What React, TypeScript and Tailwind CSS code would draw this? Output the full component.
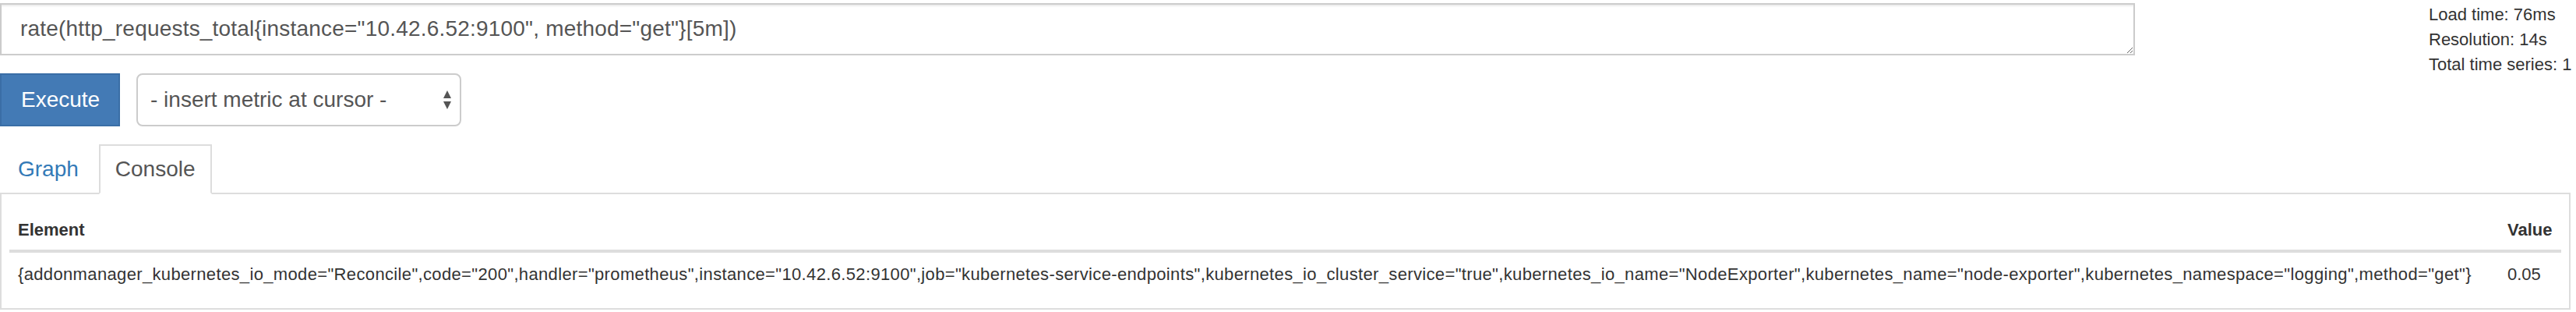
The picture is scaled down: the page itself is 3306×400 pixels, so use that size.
import React from 'react';

const query = 'rate(http_requests_total{instance="10.42.6.52:9100", method="get"}[5m])';
const element =
  '{addonmanager_kubernetes_io_mode="Reconcile",code="200",handler="prometheus",instance="10.42.6.52:9100",job="kubernetes-service-endpoints",kubernetes_io_cluster_service="true",kubernetes_io_name="NodeExporter",kubernetes_name="node-exporter",kubernetes_namespace="logging",method="get"}';

export default function App() {
  return (
    <div className="h-[400px] w-[3306px] overflow-hidden bg-white font-['Liberation_Sans',Arial,sans-serif] text-[#333]">
      {/* expression input + query stats (stats overflow the row, as in the original) */}
      <div className="flex h-[71px] items-start">
        <textarea
          defaultValue={query}
          rows={1}
          className="mt-[4px] h-[67px] w-[2740px] shrink-0 resize-y rounded-none border-2 border-[#ccc] px-[24px] py-[11px] text-[28px] leading-[40px] tracking-[0.2px] text-[#555] shadow-[inset_0_2px_2px_rgba(0,0,0,0.075)] outline-none"
        />
        <div className="ml-[377px] mt-[3px] shrink-0 text-[22px] leading-[32px]">
          <div>Load time: 76ms</div>
          <div>Resolution: 14s</div>
          <div>Total time series: 1</div>
        </div>
      </div>

      {/* execute + metric select */}
      <div className="mt-[23px] flex gap-[21px]">
        <button className="h-[68px] w-[154px] border-2 border-[#3a6ea6] bg-[#437ab5] pl-[25px] text-left text-[28px] leading-[40px] text-white">
          Execute
        </button>
        <div className="flex h-[68px] w-[417px] items-center justify-between rounded-[8px] border-2 border-[#ccc] pl-[16px] pr-[10px] text-[28px] leading-[40px] text-[#555]">
          <span>- insert metric at cursor -</span>
          <svg width="12" height="26" viewBox="0 0 12 26">
            <path d="M6 1 L11 11 L1 11 Z" fill="#555" />
            <path d="M6 25 L11 15 L1 15 Z" fill="#555" />
          </svg>
        </div>
      </div>

      {/* tabs */}
      <div className="mt-[23px] flex">
        <div className="-mb-[2px] ml-[1px] border-2 border-transparent px-[20px] py-[10px] text-[28px] leading-[40px] text-[#337ab7]">
          Graph
        </div>
        <div className="relative z-10 -mb-[2px] ml-[4px] border-2 border-[#ddd] border-b-white bg-white px-[19px] py-[10px] text-[28px] leading-[40px] text-[#555]">
          Console
        </div>
      </div>

      {/* console table */}
      <div className="w-[3299px] border-2 border-[#ddd] px-[10px] pb-[17px] pt-[20px] text-[22px] leading-[32px]">
        <div className="flex border-b-4 border-[#ddd] font-bold">
          <div className="flex-1 px-[11px] pb-[9px] pt-[10px]">Element</div>
          <div className="w-[80px] px-[11px] pb-[9px] pt-[10px]">Value</div>
        </div>
        <div className="flex">
          <div className="flex-1 px-[11px] pb-[10px] pt-[12px] tracking-[0.35px]">{element}</div>
          <div className="w-[80px] px-[11px] pb-[10px] pt-[12px]">0.05</div>
        </div>
      </div>
    </div>
  );
}
